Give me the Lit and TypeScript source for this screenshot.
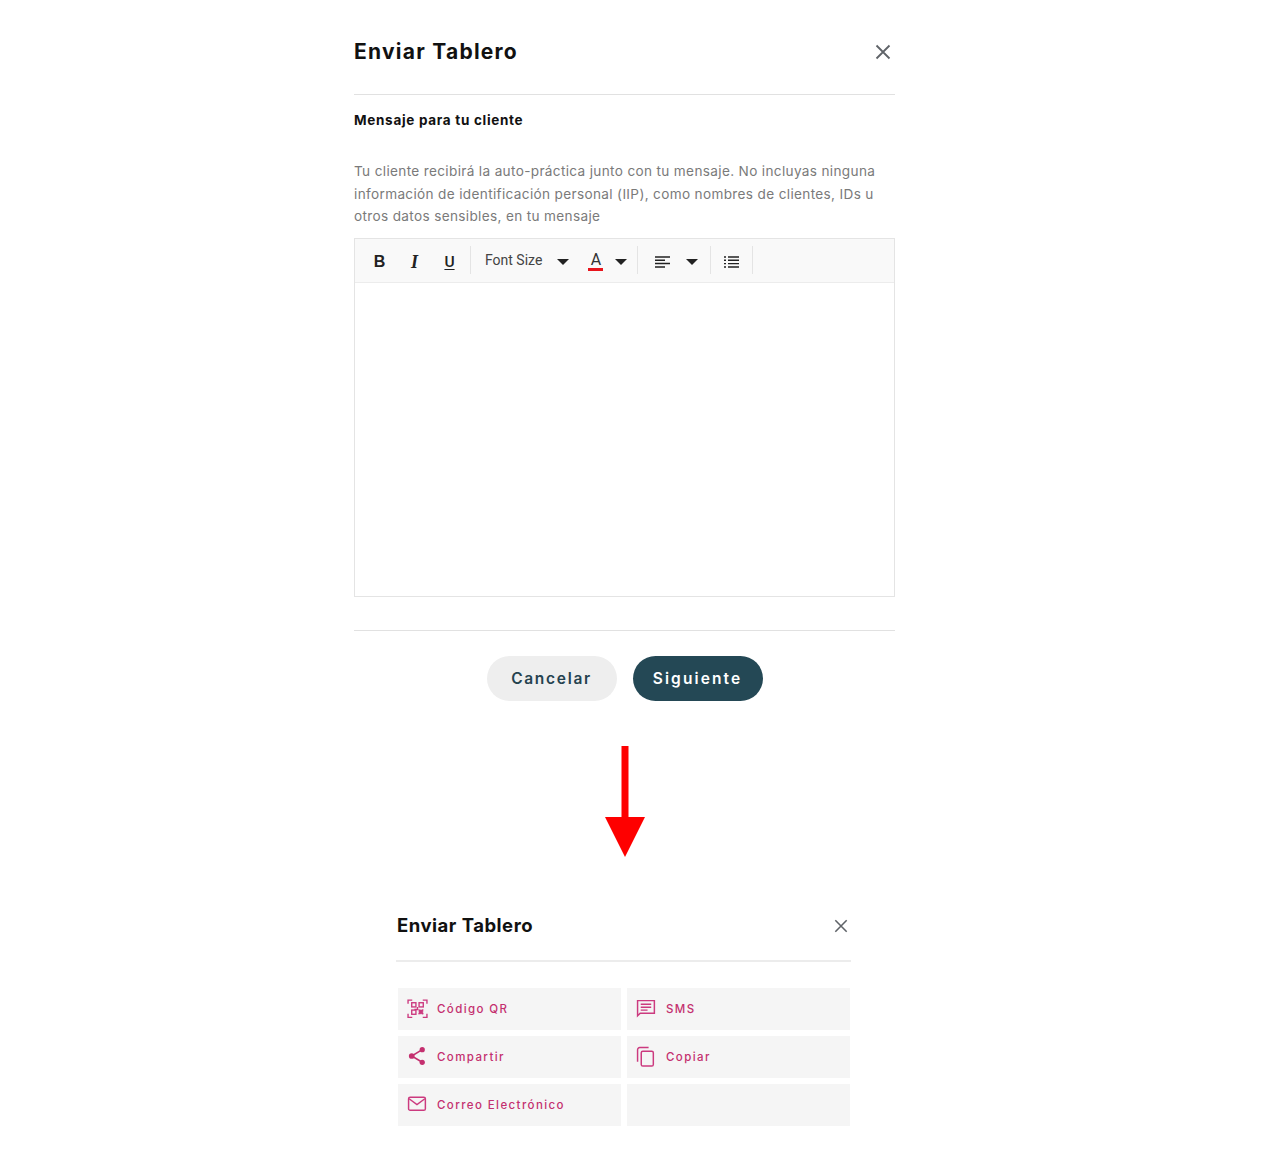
import { LitElement, html, css, svg } from 'lit';
import { customElement } from 'lit/decorators.js';

const closeIcon = (size: number) => html`
  <svg width=${size} height=${size} viewBox="0 0 16 16" fill="none" stroke="#5f6368" stroke-width="1.8">
    <path d="M1.5 1.500 14.500 14.500M14.500 1.500 1.500 14.500"></path>
  </svg>
`;

const caret = html`
  <svg class="caret" width="12" height="6" viewBox="0 0 12 6"><path d="M0 0h12L6 6z" fill="#222"></path></svg>
`;

const qrIcon = svg`
  <g fill="none" stroke="#cc3a7f" stroke-width="1.300">
    <path d="M1 5.500V2h4M15 2h4v3.500M19 15v3.500h-4M5 18.500H1V15"></path>
    <rect x="4.500" y="4.500" width="4" height="4"></rect>
    <rect x="11.500" y="4.500" width="4" height="4"></rect>
    <rect x="4.500" y="11.500" width="4" height="4"></rect>
    <path d="M11 11l4.500 4.500M15.500 11 11 15.500M13.250 11v4.500M11 13.250h4.500M10 8.500v2.500H7"></path>
  </g>
`;

const smsIcon = svg`
  <path d="M1.500 2.500h16v12H4L1.500 17z" fill="none" stroke="#cc3a7f" stroke-width="1.400"></path>
  <path d="M4.500 6h10M4.500 8.800h10M4.500 11.500h6.500" stroke="#cc3a7f" stroke-width="1.300"></path>
`;

const shareIcon = svg`
  <path d="M14.500 3.500 4.500 9.500l10 6" fill="none" stroke="#c4306f" stroke-width="1.500"></path>
  <circle cx="14.500" cy="3.500" r="2.500" fill="#c4306f"></circle>
  <circle cx="4.500" cy="9.500" r="2.700" fill="#c4306f"></circle>
  <circle cx="14.500" cy="15.500" r="2.500" fill="#c4306f"></circle>
`;

const copyIcon = svg`
  <path d="M12 1.500H3.500a2 2 0 0 0-2 2V15" fill="none" stroke="#cc3a7f" stroke-width="1.400"></path>
  <rect x="5" y="5" width="11.500" height="14" rx="1.500" fill="none" stroke="#cc3a7f" stroke-width="1.400"></rect>
`;

const mailIcon = svg`
  <rect x="1.500" y="3" width="16" height="12.500" rx="1.500" fill="none" stroke="#cc3a7f" stroke-width="1.400"></rect>
  <path d="M2 4.500 9.500 10 17 4.500" fill="none" stroke="#cc3a7f" stroke-width="1.400"></path>
`;

const shareOptions = [
  { label: 'Código QR', icon: qrIcon },
  { label: 'SMS', icon: smsIcon },
  { label: 'Compartir', icon: shareIcon },
  { label: 'Copiar', icon: copyIcon },
  { label: 'Correo Electrónico', icon: mailIcon },
  { label: '', icon: null },
];

@customElement('app-root')
export class AppRoot extends LitElement {
  static styles = css`
    :host {
      display: block;
      height: 1170px;
      background: #fff;
      font-family: 'Inter', 'Roboto', sans-serif;
      overflow: hidden;
    }
    .page {
      display: flex;
      flex-direction: column;
      align-items: flex-start;
      padding-left: 354px;
    }
    .message {
      width: 541px;
    }
    .head {
      display: flex;
      align-items: center;
      justify-content: space-between;
      box-sizing: border-box;
      height: 95px;
      padding: 8px 4px 0 0;
      border-bottom: 1px solid #e1e1e1;
    }
    .title {
      font-size: 21px;
      font-weight: 700;
      color: #111;
      letter-spacing: 1.25px;
    }
    .close { display: flex; }
    .message .close { margin-top: 1px; }
    .subtitle {
      margin-top: 16px;
      font-size: 13.500px;
      line-height: 18px;
      font-weight: 700;
      color: #111;
      letter-spacing: 0.7px;
    }
    .intro {
      margin: 31px 0 0;
      font-size: 13.600px;
      line-height: 22.500px;
      color: #7a7a7a;
      letter-spacing: 0.34px;
      width: 530px;
    }
    .editor {
      box-sizing: border-box;
      margin-top: 10px;
      height: 359px;
      border: 1.500px solid #e4e4e4;
    }
    .toolbar {
      box-sizing: border-box;
      display: flex;
      align-items: center;
      height: 44px;
      background: #f9f9f9;
      border-bottom: 1.500px solid #ececec;
      font-family: 'Roboto', sans-serif;
      color: #222;
    }
    .group {
      box-sizing: border-box;
      display: flex;
      align-items: center;
      height: 28px;
      padding-top: 4px;
      border-right: 1px solid #e4e4e4;
    }
    .tool {
      font-size: 15px;
      line-height: 20px;
      text-align: center;
      width: 35px;
    }
    .bold { font-weight: 700; font-family: 'Liberation Sans', sans-serif; font-size: 16px; }
    .italic { font-style: italic; font-weight: 700; font-family: 'Liberation Serif', serif; font-size: 18px; }
    .under { text-decoration: underline; text-underline-offset: 2px; font-weight: 500; font-size: 15.500px; }
    .size { font-size: 14px; color: #444; margin: -5px 13px 0 14px; }
    .caret-gap { margin-left: 2px; }
    .color {
      display: flex;
      flex-direction: column;
      align-items: center;
      margin: -2px 12px 0 19px;
      font-size: 16px;
      line-height: 17px;
      color: #333;
    }
    .color i {
      display: block;
      width: 15px;
      height: 2.500px;
      background: #e8141c;
    }
    .group svg { display: block; }
    .foot {
      margin-top: 33px;
      border-top: 1px solid #e1e1e1;
      display: flex;
      justify-content: center;
      gap: 16px;
      padding-top: 25px;
    }
    .btn {
      box-sizing: border-box;
      height: 45px;
      width: 130px;
      border: 0;
      border-radius: 23px;
      font: 600 15.500px 'Inter', 'Roboto', sans-serif;
      letter-spacing: 1.700px;
    }
    .cancel { background: #eeeeee; color: #25424f; }
    .next { background: #244855; color: #fff; letter-spacing: 2.100px; }
    .arrow {
      display: block;
      margin: 45px 0 0 251px;
    }
    .share {
      width: 455px;
      margin: 0 0 0 42px;
    }
    .share .head {
      height: 105px;
      padding: 33px 3px 0 1px;
      border-bottom-width: 2px;
      border-bottom-color: #ececec;
    }
    .share .title { font-size: 18.500px; letter-spacing: 0.5px; }
    .share .close { margin-top: 3px; }
    .grid {
      display: grid;
      grid-template-columns: 223px 223px;
      grid-auto-rows: 42px;
      gap: 6px;
      margin: 26px 0 0 2px;
    }
    .opt {
      display: flex;
      align-items: center;
      background: #f5f5f5;
      padding-left: 9px;
      gap: 9px;
      font-size: 11.500px;
      font-weight: 500;
      letter-spacing: 1.400px;
      color: #c4306f;
    }
    .opt svg { display: block; flex: none; }
  `;

  render() {
    return html`
      <div class="page">
        <section class="message">
          <div class="head">
            <span class="title">Enviar Tablero</span>
            <span class="close">${closeIcon(16)}</span>
          </div>
          <div class="subtitle">Mensaje para tu cliente</div>
          <p class="intro">
            Tu cliente recibirá la auto-práctica junto con tu mensaje. No incluyas ninguna información de
            identificación personal (IIP), como nombres de clientes, IDs u otros datos sensibles, en tu mensaje
          </p>
          <div class="editor">
            <div class="toolbar">
              <div class="group" style="padding-left:7px">
                <span class="tool bold">B</span>
                <span class="tool italic">I</span>
                <span class="tool under">U</span>
                <span style="width:3px"></span>
              </div>
              <div class="group">
                <span class="size">Font Size</span>
                <span class="caret-gap">${caret}</span>
                <span class="color">A<i></i></span>
                ${caret}
                <span style="width:10px"></span>
              </div>
              <div class="group">
                <svg style="margin:0 16px 0 17px" width="15" height="12" viewBox="0 0 15 12" stroke="#222" stroke-width="1.500">
                  <path d="M0 1h15M0 4.300h10M0 7.600h15M0 11h10"></path>
                </svg>
                ${caret}
                <span style="width:12px"></span>
              </div>
              <div class="group">
                <svg style="margin:0 13px 0 13px" width="15" height="12" viewBox="0 0 15 12" stroke="#222" stroke-width="1.400">
                  <path d="M0 1h2M4 1h11M0 4.300h2M4 4.300h11M0 7.600h2M4 7.600h11M0 11h2M4 11h11"></path>
                </svg>
              </div>
            </div>
          </div>
          <div class="foot">
            <button class="btn cancel">Cancelar</button>
            <button class="btn next">Siguiente</button>
          </div>
        </section>

        <svg class="arrow" width="40" height="111" viewBox="0 0 40 111">
          <path d="M16.500 0h7v71H40L20 111 0 71h16.500z" fill="#fe0000"></path>
        </svg>

        <section class="share">
          <div class="head">
            <span class="title">Enviar Tablero</span>
            <span class="close">${closeIcon(14)}</span>
          </div>
          <div class="grid">
            ${shareOptions.map(
              (o) => html`
                <div class="opt">
                  ${o.icon ? html`<svg width="21" height="21" viewBox="0 0 20 20">${o.icon}</svg>` : ''}
                  <span>${o.label}</span>
                </div>
              `
            )}
          </div>
        </section>
      </div>
    `;
  }
}
